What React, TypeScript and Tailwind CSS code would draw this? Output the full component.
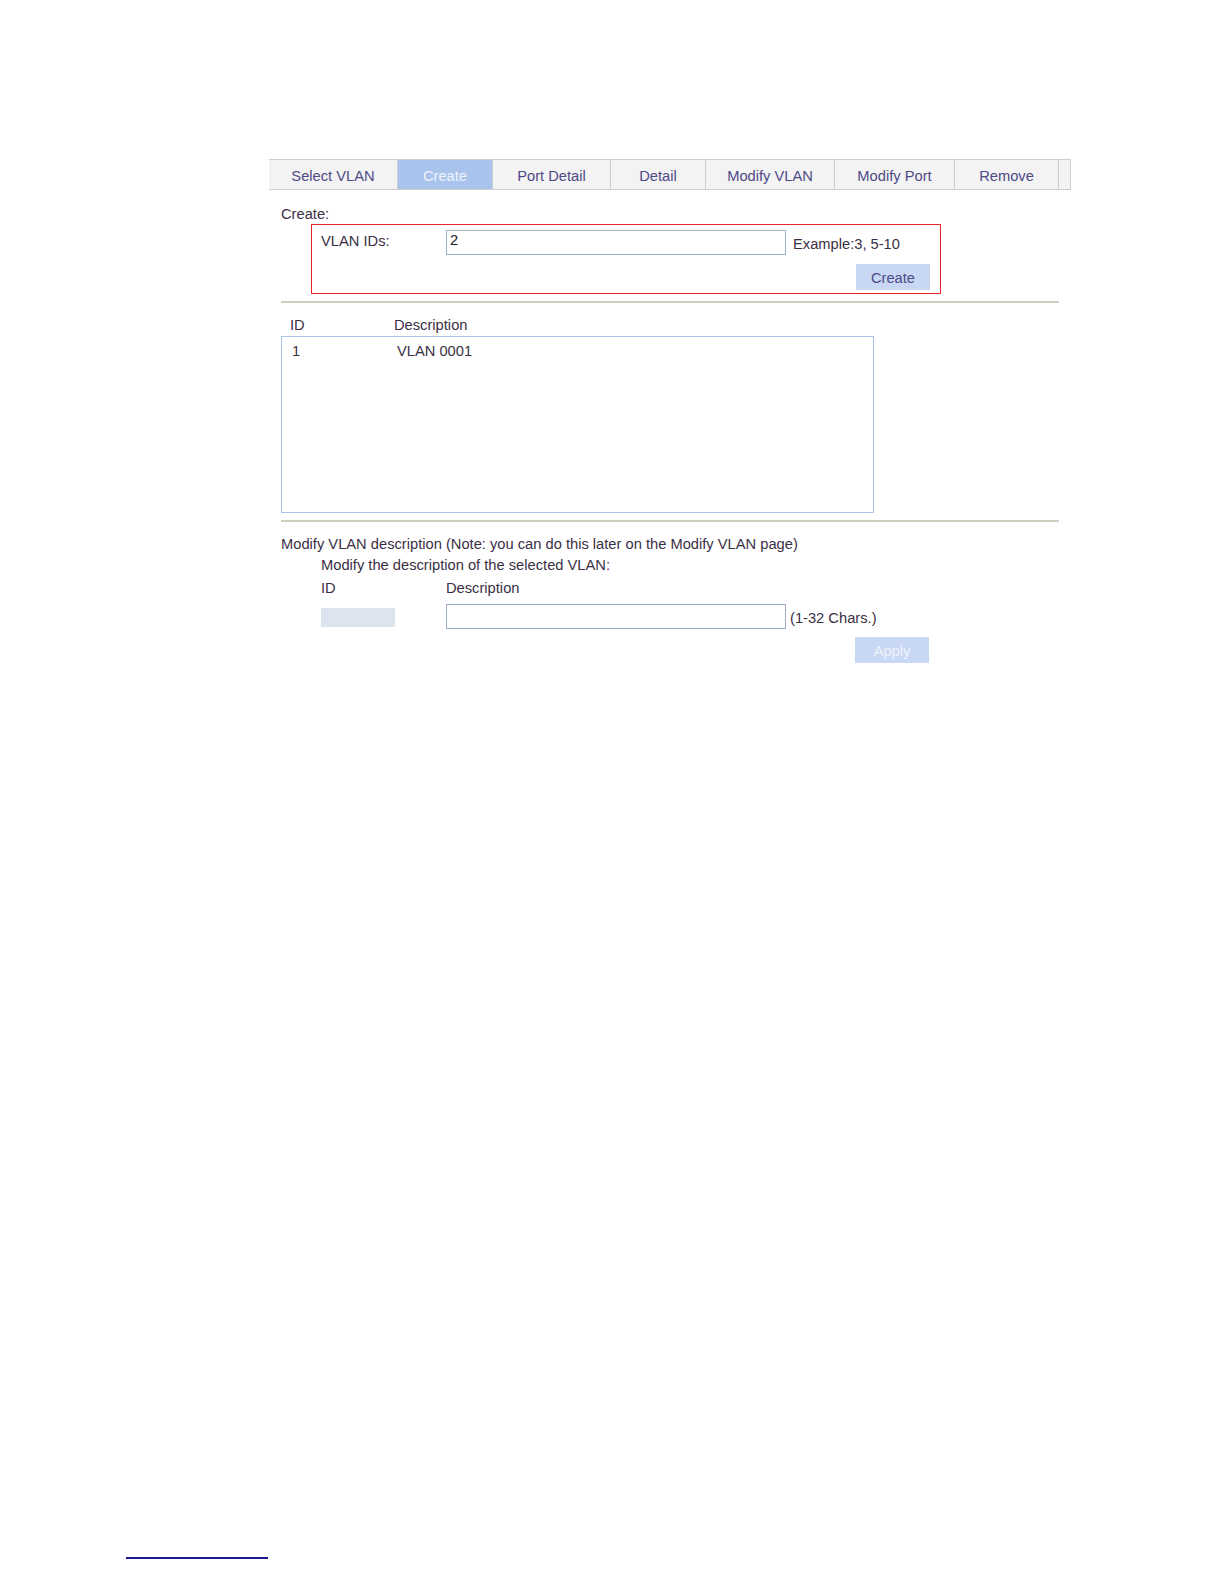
import { useState } from "react";

const TABS = [
  { label: "Select VLAN", w: "w-[129px]" },
  { label: "Create", w: "w-[95px]" },
  { label: "Port Detail", w: "w-[118px]" },
  { label: "Detail", w: "w-[95px]" },
  { label: "Modify VLAN", w: "w-[129px]" },
  { label: "Modify Port", w: "w-[120px]" },
  { label: "Remove", w: "w-[104px]" },
];

export default function App() {
  const [vlanIds, setVlanIds] = useState("2");
  const [desc, setDesc] = useState("");

  return (
    <div className="min-h-[1584px] bg-white font-['Liberation_Sans',Arial,sans-serif] text-[14.7px] text-[#3b2f45] relative">
      <div className="pt-[159px] pl-[269px]">
        {/* Tabs */}
        <div className="flex w-[802px] h-[31px] border-y border-[#cfcfcf] bg-[#f3f3f3]">
          {TABS.map((t) => (
            <div
              key={t.label}
              className={`${t.w} h-full flex items-center justify-center border-r border-[#cfcfcf] pt-[3px] ${
                t.label === "Create" ? "bg-[#a9c4ec] text-[#eef3fb]" : "text-[#4d4a86]"
              }`}
            >
              {t.label}
            </div>
          ))}
          <div className="flex-1 border-r border-[#cfcfcf]" />
        </div>

        <div className="pl-[12px]">
          {/* Create section */}
          <div className="mt-[16px] leading-[16px]">Create:</div>
          <div className="ml-[30px] mt-[2px] w-[630px] h-[70px] border border-[#e8262c] pl-[9px] pt-[4px]">
            <div className="flex items-center">
              <span className="w-[125px] -mt-[3px]">VLAN IDs:</span>
              <input
                value={vlanIds}
                onChange={(e) => setVlanIds(e.target.value)}
                className="w-[340px] h-[25px] border border-[#9db0c8] px-[3px] pb-[4px] outline-none text-[14.7px] text-[#222]"
              />
              <span className="ml-[7px] mt-[4px]">Example:3, 5-10</span>
            </div>
            <div className="flex justify-end pr-[10px] mt-[9px]">
              <button className="w-[74px] h-[26px] bg-[#c8d8f4] text-[#4d4a86] pt-[2px]">Create</button>
            </div>
          </div>

          <div className="mt-[7px] w-[778px] h-[2px] bg-[#cfcfbe]" />

          {/* VLAN list */}
          <div className="flex mt-[14px] leading-[16px]">
            <span className="w-[113px] pl-[9px]">ID</span>
            <span>Description</span>
          </div>
          <div className="mt-[3px] w-[593px] h-[177px] border border-[#a9c4ec]">
            <div className="flex mt-[6px] leading-[16px]">
              <span className="w-[115px] pl-[10px]">1</span>
              <span>VLAN 0001</span>
            </div>
          </div>

          <div className="mt-[7px] w-[778px] h-[2px] bg-[#cfcfbe]" />

          {/* Modify description */}
          <div className="mt-[14px] leading-[16px]">
            Modify VLAN description (Note: you can do this later on the Modify VLAN page)
          </div>
          <div className="pl-[40px]">
            <div className="mt-[5px] leading-[16px]">Modify the description of the selected VLAN:</div>
            <div className="flex mt-[7px] leading-[16px]">
              <span className="w-[125px]">ID</span>
              <span>Description</span>
            </div>
            <div className="flex items-center mt-[7px]">
              <div className="w-[74px] h-[19px] bg-[#dde4f0] mt-[3px]" />
              <div className="w-[51px]" />
              <input
                value={desc}
                onChange={(e) => setDesc(e.target.value)}
                className="w-[340px] h-[25px] border border-[#9db0c8] px-[3px] outline-none text-[14.7px]"
              />
              <span className="ml-[4px] mt-[4px]">(1-32 Chars.)</span>
            </div>
            <div className="flex w-[608px] justify-end mt-[8px]">
              <button disabled className="w-[74px] h-[26px] bg-[#c8d8f4] text-[#eef3fb] pt-[2px]">Apply</button>
            </div>
          </div>
        </div>
      </div>

      {/* Footnote rule */}
      <div className="absolute left-[126px] top-[1557px] w-[142px] h-[2px] bg-[#1a1a8c]" />
    </div>
  );
}
